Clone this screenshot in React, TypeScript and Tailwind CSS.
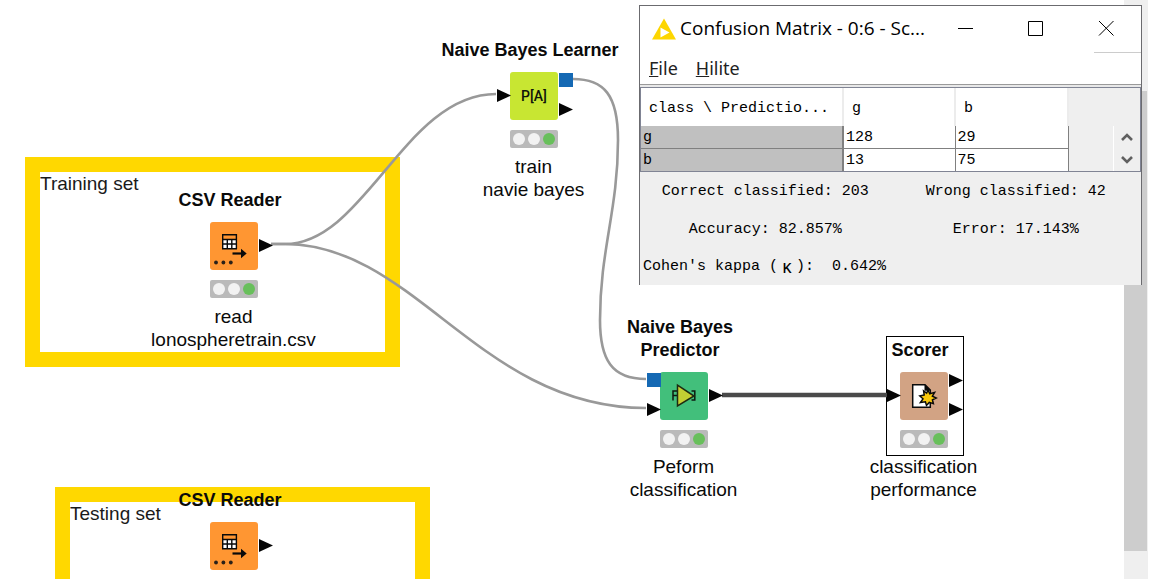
import type { ReactNode } from "react";

type PortProps = { className: string };

function ArrowPort({ className }: PortProps) {
  return (
    <svg className={`absolute h-[13px] w-[14px] ${className}`} viewBox="0 0 14 13" aria-hidden="true">
      <path d="M0 0 L14 6.5 L0 13 Z" fill="#050505" />
    </svg>
  );
}

function ModelPort({ className }: PortProps) {
  return <span className={`absolute size-[14px] bg-[#1569b4] ${className}`} />;
}

function StatusLights() {
  return (
    <div className="mt-[10px] flex h-[18px] w-12 items-center justify-center gap-[3px] rounded-xs bg-[#bababa]">
      <span className="size-3 rounded-full bg-[#f2f2f2]" />
      <span className="size-3 rounded-full bg-[#f2f2f2]" />
      <span className="size-3 rounded-full bg-[#68bf5b]" />
    </div>
  );
}

type NodeProps = {
  title: string[];
  label?: string[];
  place: string;
  color: string;
  icon: ReactNode;
  ports: ReactNode;
};

function WorkflowNode({ title, label, place, color, icon, ports }: NodeProps) {
  return (
    <section className={`absolute flex w-[200px] flex-col items-center leading-[23px] text-[#0a0a0a] ${place}`}>
      <h2 className="pr-2 text-center text-[18px] font-bold">
        {title.map((line) => (
          <span key={line} className="block">{line}</span>
        ))}
      </h2>
      <div className={`relative mt-[10px] size-12 rounded-[3px] ${color}`}>
        {icon}
        {ports}
      </div>
      {label && (
        <>
          <StatusLights />
          <p className="mt-[7px] pr-px text-center text-[19px]">
            {label.map((line) => (
              <span key={line} className="block">{line}</span>
            ))}
          </p>
        </>
      )}
    </section>
  );
}

function CsvIcon() {
  return (
    <svg className="size-12" viewBox="0 0 48 48" aria-hidden="true">
      <rect x="12.5" y="12.5" width="14" height="14" fill="#fff" stroke="#0a0a0a" />
      <rect x="13" y="13" width="13" height="4" fill="#ff9632" />
      <path d="M12 12.7H27M12 17.5H27M12 22H27M12 26.7H27M12.7 12V27M17.3 17V27M21.8 17V27M26.4 12V27" stroke="#0a0a0a" strokeWidth="1.4" fill="none" />
      <path d="M22.5 31.5H33" stroke="#0a0a0a" strokeWidth="2.2" />
      <path d="M31 26.8 L36.7 31.5 L31 36.2 Z" fill="#0a0a0a" />
      <circle cx="6" cy="40.5" r="1.9" fill="#2b2118" />
      <circle cx="13.4" cy="40.5" r="1.9" fill="#2b2118" />
      <circle cx="20.8" cy="40.5" r="1.9" fill="#2b2118" />
    </svg>
  );
}

function LearnerIcon() {
  return (
    <span className="flex size-12 items-center justify-center font-['Roboto',sans-serif] text-[14px] font-medium text-[#10140a]">
      P[A]
    </span>
  );
}

function PredictorIcon() {
  return (
    <svg className="size-12" viewBox="0 0 48 48" aria-hidden="true">
      <path d="M13 28.5V19H17M13 23.5H17M31.5 19H34.8V28H31.5" stroke="#0c1a10" strokeWidth="1.5" fill="none" />
      <path d="M17.5 13.2 L34 24 L17.5 34 Z" fill="#c3cf33" stroke="#1e2a12" strokeWidth="1.5" />
    </svg>
  );
}

function ScorerIcon() {
  return (
    <svg className="size-12" viewBox="0 0 48 48" aria-hidden="true">
      <path d="M12.7 12.7H25L30.3 18V35.3H12.7Z" fill="#fff" stroke="#0a0a0a" strokeWidth="1.5" />
      <path d="M24.5 12 L31 18.8 H24.5Z" fill="#0a0a0a" />
      <path d="M28 18 L29.8 21.8 L34.6 20.4 L32.4 24.2 L36.2 26 L32.4 27.8 L33.4 31.6 L29.3 30.4 L26.5 33.4 L25.4 29.8 L20.4 30.6 L23 26.8 L19.8 24 L24.2 23 L23.6 19 L26.6 21.2Z" fill="#f8c70c" stroke="#0a0a0a" strokeWidth="1.5" />
    </svg>
  );
}

function Connections() {
  return (
    <svg className="absolute inset-0 size-full" fill="none" aria-hidden="true">
      <g stroke="#999" strokeWidth="2.6">
        <path d="M271 244H285C365 244 405 94 496 94" />
        <path d="M271 244H285C415 244 480 408 646 408" />
        <path d="M573 79C604 79 618 95 618 140C618 210 600 250 600 320C600 360 612 379 646 379" />
      </g>
      <path d="M722 395H888" stroke="#4a4a4a" strokeWidth="4.4" />
    </svg>
  );
}

const matrix = [
  { name: "g", values: [128, 29] },
  { name: "b", values: [13, 75] },
];

function Chevron({ d }: { d: string }) {
  return (
    <svg className="h-2 w-3" viewBox="0 0 12 8" aria-hidden="true">
      <path d={d} stroke="#606060" strokeWidth="2.6" fill="none" />
    </svg>
  );
}

function MatrixTable() {
  return (
    <div className="flex border border-[#808494] bg-[#efefef]">
      <table className="w-[427px] table-fixed border-collapse text-left">
        <colgroup>
          <col className="w-[202px]" />
          <col className="w-[112px]" />
          <col className="w-[113px]" />
        </colgroup>
        <thead>
          <tr className="h-[38px] bg-white">
            <th className="border-r-2 border-[#ececec] pt-[3px] pl-2 font-normal">class \ Predictio...</th>
            <th className="border-r-2 border-[#ececec] pt-[3px] pl-2 font-normal">g</th>
            <th className="border-r-2 border-[#ececec] pt-[3px] pl-2 font-normal">b</th>
          </tr>
        </thead>
        <tbody>
          {matrix.map((row) => (
            <tr key={row.name} className="h-[22px] border-b border-[#808080] bg-white last:border-b-0">
              <th className="border-r-2 border-[#808080] bg-[#c0c0c0] pt-[2px] pl-[2px] font-normal">{row.name}</th>
              {row.values.map((value) => (
                <td key={value} className="border-r border-[#808080] pt-[2px] pl-[2px]">{value}</td>
              ))}
            </tr>
          ))}
        </tbody>
      </table>
      <div className="ml-auto flex w-[27px] flex-col pt-[38px]">
        <button type="button" aria-label="Scroll up" className="flex flex-1 items-center justify-center border-l border-white">
          <Chevron d="M1 7 L6 2 L11 7" />
        </button>
        <button type="button" aria-label="Scroll down" className="flex flex-1 items-center justify-center border-l border-white">
          <Chevron d="M1 1 L6 6 L11 1" />
        </button>
      </div>
    </div>
  );
}

function ConfusionMatrixWindow() {
  return (
    <div className="absolute top-[5px] left-[639px] w-[503px] border border-b-0 border-[#6b6b6f] bg-[#efefef] text-black">
      <header className="flex h-[46px] items-center bg-white">
        <svg className="ml-3 h-[22px] w-6 shrink-0" viewBox="0 0 24 22" aria-hidden="true">
          <path d="M12 0.5 L24 21.5 H0Z" fill="#fdd600" />
          <path d="M8.5 9.5 L17.5 14.5 L8.5 19.5Z" fill="#fff" />
        </svg>
        <h1 className="ml-1 flex-1 pb-[2px] font-['Open_Sans',sans-serif] text-[19px] whitespace-nowrap">
          Confusion Matrix - 0:6 - Sc...
        </h1>
        <button type="button" aria-label="Minimize" className="flex h-full w-[70px] shrink-0 items-center justify-center">
          <svg className="size-4" viewBox="0 0 16 16"><path d="M0 7.5H15" stroke="#000" /></svg>
        </button>
        <button type="button" aria-label="Maximize" className="flex h-full w-[70px] shrink-0 items-center justify-center">
          <svg className="size-4" viewBox="0 0 16 16"><path d="M0.5 0.5H14.5V14.5H0.5Z" stroke="#000" fill="none" /></svg>
        </button>
        <button type="button" aria-label="Close" className="flex h-full w-[70px] shrink-0 items-center justify-center">
          <svg className="size-4" viewBox="0 0 16 16"><path d="M1 0L15.5 14.5M15.5 0L1 14.5" stroke="#000" /></svg>
        </button>
      </header>
      <nav className="flex h-8 items-center gap-[18px] bg-white pl-[9px] font-['Noto_Sans',sans-serif] text-[18px] text-[#222]">
        <span className="absolute top-[46px] right-0 h-px w-[47px] bg-[#ccc]" />
        <button type="button"><u>F</u>ile</button>
        <button type="button"><u>H</u>ilite</button>
      </nav>
      <div className="h-[3px] border-t border-[#9a9a9a] bg-[#e8e8e8]" />
      <div className="font-['Liberation_Mono',monospace] text-[15px] leading-5">
        <MatrixTable />
        <div className="grid grid-cols-2 text-center whitespace-pre">
          <p className="h-[38px] pt-[10px]">Correct classified: 203</p>
          <p className="h-[38px] pt-[10px]">Wrong classified: 42</p>
          <p className="h-[38px] pt-[10px]">Accuracy: 82.857%</p>
          <p className="h-[38px] pt-[10px]">Error: 17.143%</p>
          <p className="flex h-[37px] pt-[9px] pl-[3px]">
            <span>Cohen's kappa (</span>
            <span className="w-[18px] font-['Liberation_Sans',sans-serif] text-[18px]">κ</span>
            <span>):{"  "}0.642%</span>
          </p>
        </div>
      </div>
    </div>
  );
}

export default function App() {
  return (
    <div className="relative flex h-screen overflow-hidden bg-white font-['Liberation_Sans',Arial,sans-serif]">
      <main className="relative flex-1 overflow-hidden">
        <div className="absolute top-[157px] left-[25px] h-[210px] w-[375px] border-[15px] border-[#ffd800] text-[19px] leading-6 text-[#1a1a1a]">
          Training set
        </div>
        <div className="absolute top-[487px] left-[55px] h-[210px] w-[375px] border-[15px] border-[#ffd800] text-[19px] leading-6 text-[#1a1a1a]">
          Testing set
        </div>
        <div className="absolute top-[336px] left-[886px] h-[120px] w-[78px] border border-black" />
        <Connections />
        <WorkflowNode
          title={["CSV Reader"]}
          label={["read", "lonospheretrain.csv"]}
          place="top-[189px] left-[134px]"
          color="bg-[#ff9632]"
          icon={<CsvIcon />}
          ports={<ArrowPort className="top-[17px] left-[49px]" />}
        />
        <WorkflowNode
          title={["CSV Reader"]}
          place="top-[489px] left-[134px]"
          color="bg-[#ff9632]"
          icon={<CsvIcon />}
          ports={<ArrowPort className="top-[17px] left-[49px]" />}
        />
        <WorkflowNode
          title={["Naive Bayes Learner"]}
          label={["train", "navie bayes"]}
          place="top-[39px] left-[434px]"
          color="bg-[#c8e632]"
          icon={<LearnerIcon />}
          ports={
            <>
              <ArrowPort className="top-[17px] -left-[13px]" />
              <ModelPort className="top-px left-[49px]" />
              <ArrowPort className="top-[31px] left-[49px]" />
            </>
          }
        />
        <WorkflowNode
          title={["Naive Bayes", "Predictor"]}
          label={["Peform", "classification"]}
          place="top-[316px] left-[584px]"
          color="bg-[#42bf7b]"
          icon={<PredictorIcon />}
          ports={
            <>
              <ModelPort className="top-px -left-[13px]" />
              <ArrowPort className="top-[31px] -left-[13px]" />
              <ArrowPort className="top-[17px] left-[49px]" />
            </>
          }
        />
        <WorkflowNode
          title={["Scorer"]}
          label={["classification", "performance"]}
          place="top-[339px] left-[824px]"
          color="bg-[#d2a384]"
          icon={<ScorerIcon />}
          ports={
            <>
              <ArrowPort className="top-[17px] -left-[13px]" />
              <ArrowPort className="top-[2px] left-[49px]" />
              <ArrowPort className="top-[31px] left-[49px]" />
            </>
          }
        />
      </main>
      <aside className="mr-[2px] w-6 shrink-0 bg-[#efefef] pt-[91px]">
        <div className="mr-px h-[460px] bg-[#cdcdcd]" />
      </aside>
      <ConfusionMatrixWindow />
    </div>
  );
}
